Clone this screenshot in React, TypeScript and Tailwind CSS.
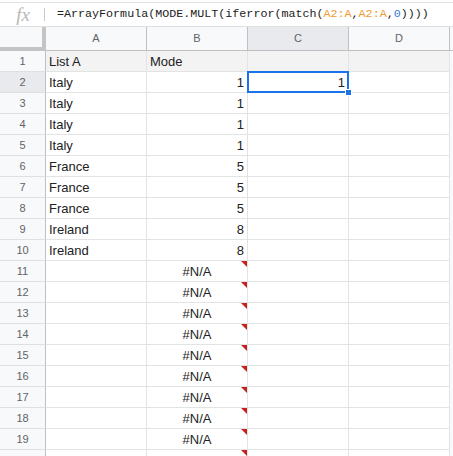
import React from "react";

type Row = { a: string; b: string; err?: boolean };

const rows: Row[] = [
  { a: "List A", b: "Mode" },
  { a: "Italy", b: "1" },
  { a: "Italy", b: "1" },
  { a: "Italy", b: "1" },
  { a: "Italy", b: "1" },
  { a: "France", b: "5" },
  { a: "France", b: "5" },
  { a: "France", b: "5" },
  { a: "Ireland", b: "8" },
  { a: "Ireland", b: "8" },
  ...Array.from({ length: 9 }, () => ({ a: "", b: "#N/A", err: true })),
  // row 20 is only peeking in at the bottom edge
  { a: "", b: "", err: true },
];

const cols = ["A", "B", "C", "D"];

function ErrorMark() {
  return (
    <span className="absolute right-0 top-0 h-0 w-0 border-l-[6px] border-t-[6px] border-l-transparent border-t-[#c5221f]" />
  );
}

export default function App() {
  return (
    <div className="h-[456px] w-[453px] overflow-hidden bg-white font-['Liberation_Sans',Arial,sans-serif] text-[13px] text-[#222]">
      {/* formula bar */}
      <div className="mt-[2px] flex h-[25px] items-center border-y border-[#e0e0e0]">
        <div className="flex w-[44px] justify-center pl-[2px] font-['Liberation_Serif',serif] text-[19px] italic leading-none text-[#b8b8b8]">
          fx
        </div>
        <div className="h-[13px] w-px bg-[#c8c8c8]" />
        <div className="pl-[12px] font-['Liberation_Mono',monospace] text-[11.7px] text-[#222]">
          =ArrayFormula(MODE.MULT(iferror(match(
          <span className="text-[#f29a2e]">A2:A</span>,
          <span className="text-[#f29a2e]">A2:A</span>,
          <span className="text-[#3d7dd6]">0</span>))))
        </div>
      </div>

      {/* column headers */}
      <div className="grid h-[24px] grid-cols-[46px_101px_101px_101px_101px_4px] text-[11px] text-[#5f6368]">
        <div className="border-b-4 border-r-4 border-[#c4c4c4] bg-[#f8f9fa]" />
        {cols.map((c) => (
          <div
            key={c}
            className={`flex items-center justify-center border-b border-r border-[#c0c0c0] ${
              c === "C" ? "bg-[#e8eaed]" : "bg-[#f8f9fa]"
            }`}
          >
            {c}
          </div>
        ))}
        <div className="border-b border-[#c0c0c0] bg-[#f8f9fa]" />
      </div>

      {/* rows */}
      {rows.map((r, i) => {
        const n = i + 1;
        const head = n === 1;
        const cellBg = head ? "bg-[#f3f3f3]" : "bg-white";
        const isNum = !head && !r.err;
        return (
          <div key={n} className="grid h-[21px] grid-cols-[46px_101px_101px_101px_101px_4px]">
            <div
              className={`flex items-center justify-center border-b border-r border-b-[#e0e0e0] border-r-[#c0c0c0] text-[11px] text-[#5f6368] ${
                n === 2 ? "bg-[#e8eaed]" : "bg-[#f8f9fa]"
              }`}
            >
              {n < 20 ? n : ""}
            </div>
            <div className={`flex items-end border-b border-r border-[#e2e3e3] px-[3px] pb-[2px] leading-[15px] ${cellBg}`}>
              {r.a}
            </div>
            <div
              className={`relative flex items-end border-b border-r border-[#e2e3e3] px-[3px] pb-[2px] leading-[15px] ${cellBg} ${
                isNum ? "justify-end" : r.err ? "justify-center" : "justify-start"
              }`}
            >
              {r.b}
              {r.err && <ErrorMark />}
            </div>
            <div className={`relative flex items-end justify-end border-b border-r border-[#e2e3e3] px-[3px] pb-[2px] leading-[15px] ${cellBg}`}>
              {n === 2 && (
                <>
                  1
                  <span className="absolute -left-px -top-px h-[22px] w-[102px] border-2 border-[#1a73e8]" />
                  <span className="absolute -bottom-[4px] -right-[4px] z-10 h-[7px] w-[7px] border border-white bg-[#1a73e8]" />
                </>
              )}
            </div>
            <div className={`border-b border-r border-[#e2e3e3] ${cellBg}`} />
            <div className="bg-[#f8f9fa]" />
          </div>
        );
      })}
    </div>
  );
}
